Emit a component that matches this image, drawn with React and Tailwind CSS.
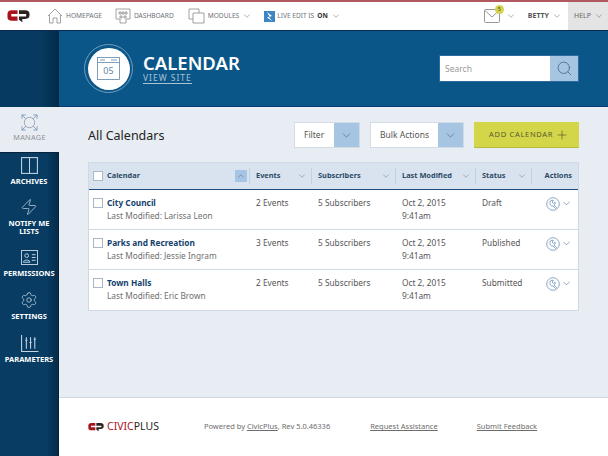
import React from 'react';
import { ChevronDown, ChevronUp, Search, Plus, Settings, Zap } from 'lucide-react';

const font = 'font-["Noto_Sans","Open_Sans",sans-serif]';

const CpLogo = ({ className }) => (
  <svg viewBox="0 0 24 14" className={className}>
    <path d="M11 1H5Q0.500 1 0.500 5V8Q0.500 12 5 12H11V7.500H4.500V5H11Z" fill="#a8141e" />
    <path d="M12.500 1H19Q23.500 1 23.500 5V6Q23.500 10 19 10H16V13.500L12.500 11V7.500H20V5H12.500Z" fill="#2b2320" />
  </svg>
);

const TopLink = ({ icon, label, chevron, gap }) => (
  <div className={`flex items-center ${gap}`}>
    {icon}
    <span className="ml-[3px] text-[6.600px] text-[#6d7278]">{label}</span>
    {chevron && <ChevronDown size={10} strokeWidth={1.2} className="ml-[3px] text-[#666]" />}
  </div>
);

const NavItem = ({ icon, label, mb }) => (
  <div className={`flex flex-col items-center ${mb}`}>
    <div className="h-[23px] pt-[1px] flex items-center justify-center">{icon}</div>
    <div className="mt-[1px] text-[7.500px] leading-[8px] font-bold text-white text-center">{label}</div>
  </div>
);

const navIcon = 'w-[19px] h-[19px] text-[#c5d5e4]';

const ActionIcon = () => (
  <svg viewBox="0 0 14 14" className="w-[14px] h-[14px] text-[#6b93b8]" fill="none" stroke="currentColor" strokeWidth="0.8">
    <circle cx="7" cy="7" r="6.300" />
    <path d="M4 6.500A2.500 2.500 0 0 1 7.500 3.500L6 5L7.500 6.500L9 5A2.500 2.500 0 0 1 8 8L10.500 10.500L9.500 11.500L7 9A2.500 2.500 0 0 1 4 6.500Z" />
  </svg>
);

const rows = [
  { name: 'City Council', by: 'Larissa Leon', events: '2 Events', status: 'Draft' },
  { name: 'Parks and Recreation', by: 'Jessie Ingram', events: '3 Events', status: 'Published' },
  { name: 'Town Halls', by: 'Eric Brown', events: '2 Events', status: 'Submitted' },
];

const grid = 'grid grid-cols-[161px_62px_84px_80px_56px_48px]';

const HeadCell = ({ label }) => (
  <div className="relative flex items-center justify-between pl-[6px] pr-[5px] text-[7.400px] font-bold text-[#2c4a66]">
    <span>{label}</span>
    <ChevronDown size={10} strokeWidth={1} className="text-[#4d6277]" />
    <span className="absolute right-0 top-[5px] bottom-[5px] w-px bg-[#c3d0de]" />
  </div>
);

const Checkbox = () => <span className="block w-[10px] h-[10px] border border-[#a9b6c4] bg-white" />;

const App = () => {
  return (
    <div className={`w-[608px] h-[456px] overflow-hidden flex flex-col bg-white ${font}`}>
      {/* top bar */}
      <div className="h-[31px] shrink-0 flex border-t-2 border-t-[#b05a60] border-b border-b-[#0a2a55] bg-white">
        <div className="w-[47px] flex items-center pl-[7px]">
          <CpLogo className="w-[23px] h-[14px]" />
        </div>
        <TopLink
          gap="mr-[13px]"
          label="HOMEPAGE"
          icon={
            <svg viewBox="0 0 16 16" className="w-[16px] h-[16px]" fill="none" stroke="#8c8c8c" strokeWidth="0.8">
              <path d="M1 8L8 1L15 8M2.500 7V15H6V10H10V15H13.500V7" />
            </svg>
          }
        />
        <TopLink
          gap="mr-[14px]"
          label="DASHBOARD"
          icon={
            <svg viewBox="0 0 16 16" className="w-[16px] h-[16px]" fill="none" stroke="#8c8c8c" strokeWidth="0.8">
              <path d="M1 1H15V11H11M5 11H1V1" />
              <path d="M4 4H6V6H4ZM7 4H9V6H7ZM10 4H12V6H10ZM5 8H7V10H5ZM9 8H11V10H9ZM5 11V15H11V11" />
            </svg>
          }
        />
        <TopLink
          chevron
          gap="mr-[12px]"
          label="MODULES"
          icon={
            <svg viewBox="0 0 17 16" className="w-[17px] h-[16px]" fill="none" stroke="#8c8c8c" strokeWidth="0.8">
              <path d="M5 11H1V1H11V5" />
              <path d="M5 5H16V15H5Z" />
            </svg>
          }
        />
        <div className="flex items-center">
          <svg viewBox="0 0 11 11" className="w-[11px] h-[11px]">
            <rect width="11" height="11" fill="#3b86c4" />
            <path d="M3 1L8 5L5 6L8 10L3 6.500L5.500 5.500Z" fill="white" />
          </svg>
          <span className="ml-[2px] text-[6.600px] text-[#6d7278]">LIVE EDIT IS</span>
          <span className="ml-[3px] text-[6.600px] font-bold text-[#333]">ON</span>
          <ChevronDown size={10} strokeWidth={1.2} className="ml-[3px] text-[#666]" />
        </div>
        <div className="ml-auto flex items-center">
          <div className="relative mr-[6px]">
            <svg viewBox="0 0 16 14" className="w-[16px] h-[14px]" fill="none" stroke="#8c8c8c" strokeWidth="0.9">
              <rect x="0.500" y="0.500" width="15" height="13" rx="1" />
              <path d="M1 1.500L8 8L15 1.500" />
            </svg>
            <span className="absolute -top-[4px] -right-[4px] w-[9px] h-[9px] rounded-full bg-[#d3d34c] text-[5.500px] leading-[9px] text-center text-[#444]">5</span>
          </div>
          <ChevronDown size={10} strokeWidth={1.2} className="mr-[12px] text-[#666]" />
          <span className="text-[7px] font-bold text-[#555] mr-[3px]">BETTY</span>
          <ChevronDown size={10} strokeWidth={1.2} className="mr-[6px] text-[#666]" />
          <div className="h-full w-[40px] bg-[#e4e4e4] flex items-center pl-[6px] gap-[3px]">
            <span className="text-[7px] text-[#666]">HELP</span>
            <ChevronDown size={10} strokeWidth={1.2} className="text-[#666]" />
          </div>
        </div>
      </div>

      <div className="flex-1 flex min-h-0">
        {/* left column */}
        <div className="w-[59px] shrink-0 flex flex-col">
          <div className="h-[76px] bg-gradient-to-r from-[#063a60] via-[#063a60] via-70% to-[#022a47]" />
          <div className="h-[45px] bg-[#e8edf3] flex flex-col items-center pt-[7px]">
            <svg viewBox="0 0 18 18" className="w-[17px] h-[17px]" fill="none" stroke="#6c8cab" strokeWidth="0.8">
              <circle cx="9" cy="9" r="5.500" stroke="#8793a0" />
              <path d="M1 5V1H5M13 1H17V5M1 13V17H5M13 17H17V13" />
              <path d="M1 1L5 5M17 1L13 5M1 17L5 13M17 17L13 13" />
            </svg>
            <span className="mt-[1px] text-[7.300px] text-[#8b9198] tracking-[0.3px]">MANAGE</span>
          </div>
          <div className="flex-1 bg-gradient-to-r from-[#083c63] via-[#083c63] via-80% to-[#052c4a] border-t border-t-[#06223d] border-r border-r-[#06223d]">
            <NavItem
              mb="mb-[10px]"
              label="ARCHIVES"
              icon={
                <svg viewBox="0 0 18 18" className={navIcon} fill="none" stroke="currentColor" strokeWidth="1">
                  <rect x="1.500" y="1.500" width="15" height="15" />
                  <path d="M9 1.500V16.500" />
                </svg>
              }
            />
            <NavItem
              mb="mb-[10px]"
              label={<>NOTIFY ME<br />LISTS</>}
              icon={<Zap size={18} strokeWidth={1} className="text-[#c5d5e4]" />}
            />
            <NavItem
              mb="mb-[11px]"
              label="PERMISSIONS"
              icon={
                <svg viewBox="0 0 18 16" className="w-[17px] h-[15px] text-[#c5d5e4]" fill="none" stroke="currentColor" strokeWidth="1">
                  <rect x="0.500" y="0.500" width="17" height="15" />
                  <circle cx="6" cy="6" r="2" />
                  <path d="M2.500 13C2.500 10 9.500 10 9.500 13ZM11.500 5H15.500M11.500 8H15.500M11.500 11H15.500" />
                </svg>
              }
            />
            <NavItem mb="mb-[11px]" label="SETTINGS" icon={<Settings size={18} strokeWidth={1} className="text-[#c5d5e4]" />} />
            <NavItem
              mb="mb-[11px]"
              label="PARAMETERS"
              icon={
                <svg viewBox="0 0 18 18" className={navIcon} fill="none" stroke="currentColor" strokeWidth="1">
                  <path d="M1.500 1V16.500H17.500" />
                  <path d="M6 3V14M10 3V14M14 3V14" />
                  <path d="M5 6H7M9 8H11M13 5H15" />
                </svg>
              }
            />
          </div>
        </div>

        <div className="flex-1 flex flex-col min-w-0">
          {/* page header */}
          <div className="h-[76px] shrink-0 bg-[#0b5688] flex items-center pl-[25px] pr-[29px] border-b border-b-[#0a3a70]">
            <div className="w-[49px] h-[49px] rounded-full border border-[#6f9cbd] flex items-center justify-center">
              <div className="w-[42px] h-[42px] rounded-full bg-white flex items-center justify-center">
                <svg viewBox="0 0 23 23" className="w-[23px] h-[23px]" fill="none" stroke="#5f86a8" strokeWidth="0.8">
                  <rect x="0.500" y="0.500" width="22" height="22" />
                  <path d="M0.500 5.500H22.500M3 3H8M14 3H20" />
                  <text x="11.500" y="17" textAnchor="middle" fontSize="9" fill="#5f86a8" stroke="none">05</text>
                </svg>
              </div>
            </div>
            <div className="ml-[10px]">
              <div className="text-[18.500px] leading-[18px] font-semibold text-white">CALENDAR</div>
              <div className="w-fit text-[8.500px] leading-[11px] text-[#a9c3d9] tracking-[1px] border-b border-b-[#a9c3d9]">VIEW SITE</div>
            </div>
            <div className="ml-auto flex h-[27px] w-[140px] border border-[#2c6c9c]">
              <div className="flex-1 bg-white pl-[5px] text-[8.500px] leading-[25px] text-[#9a9a9a]">Search</div>
              <div className="w-[28px] bg-[#a6c5e2] flex items-center justify-center">
                <Search size={17} strokeWidth={1} className="text-[#37597a]" />
              </div>
            </div>
          </div>

          {/* content */}
          <div className="flex-1 bg-[#e8edf3] pl-[29px] pr-[29px] pt-[15px] border-b border-b-[#cfd9e4]">
            <div className="flex items-center h-[26px] mb-[14px]">
              <h1 className="pt-[2px] text-[12.500px] text-[#222]">All Calendars</h1>
              <div className="ml-auto flex h-[26px] w-[66px] border border-[#d3dbe4] bg-white">
                <span className="flex-1 pl-[9px] text-[8.500px] leading-[24px] text-[#555]">Filter</span>
                <span className="w-[25px] bg-[#a6c5e2] flex items-center justify-center">
                  <ChevronDown size={13} strokeWidth={1} className="text-[#34587c]" />
                </span>
              </div>
              <div className="ml-[10px] flex h-[26px] w-[94px] border border-[#d3dbe4] bg-white">
                <span className="flex-1 pl-[9px] text-[8.500px] leading-[24px] text-[#555]">Bulk Actions</span>
                <span className="w-[25px] bg-[#a6c5e2] flex items-center justify-center">
                  <ChevronDown size={13} strokeWidth={1} className="text-[#34587c]" />
                </span>
              </div>
              <div className="ml-[10px] flex items-center justify-between h-[26px] w-[105px] pl-[15px] pr-[10px] bg-[#d4d64a] border-b border-b-[#b9bb3c]">
                <span className="text-[7.500px] text-[#5a5a2c] tracking-[0.7px]">ADD CALENDAR</span>
                <Plus size={14} strokeWidth={1} className="text-[#45451f]" />
              </div>
            </div>

            <div className="border border-[#cfd9e4] bg-white">
              <div className={`${grid} h-[27px] bg-[#d9e3ef] border-b-[1.500px] border-b-[#1d4d7a]`}>
                <div className="relative flex items-center pl-[4px] pr-[3px] text-[7.400px] font-bold text-[#2c4a66]">
                  <Checkbox />
                  <span className="ml-[4px]">Calendar</span>
                  <span className="ml-auto w-[12px] h-[12px] bg-[#a6c5e2] flex items-center justify-center">
                    <ChevronUp size={10} strokeWidth={1} className="text-[#34587c]" />
                  </span>
                  <span className="absolute right-0 top-[5px] bottom-[5px] w-px bg-[#c3d0de]" />
                </div>
                <HeadCell label="Events" />
                <HeadCell label="Subscribers" />
                <HeadCell label="Last Modified" />
                <HeadCell label="Status" />
                <div className="flex items-center justify-end pr-[8px] text-[7.400px] font-bold text-[#2c4a66]">Actions</div>
              </div>
              {rows.map((row, i) => (
                <div key={row.name} className={`${grid} h-[40px] pt-[6px] text-[8.300px] leading-[13px] text-[#555] ${i < 2 ? 'border-b border-b-[#cfd9e4]' : ''}`}>
                  <div className="pl-[4px] flex">
                    <div className="pt-[2px]"><Checkbox /></div>
                    <div className="ml-[4px]">
                      <div className="font-bold text-[#123f6d]">{row.name}</div>
                      <div className="text-[#6f6f6f]">Last Modified: {row.by}</div>
                    </div>
                  </div>
                  <div className="pl-[6px]">{row.events}</div>
                  <div className="pl-[6px]">5 Subscribers</div>
                  <div className="pl-[6px]">Oct 2, 2015<br />9:41am</div>
                  <div className="pl-[6px]">{row.status}</div>
                  <div className="pl-[14px] flex items-start pt-[1px] gap-[1px]">
                    <ActionIcon />
                    <ChevronDown size={11} strokeWidth={1.3} className="mt-[1px] text-[#3f6e99]" />
                  </div>
                </div>
              ))}
            </div>
          </div>

          {/* footer */}
          <div className="h-[58px] shrink-0 bg-white flex items-center pl-[29px] text-[7.500px] text-[#6d6d6d]">
            <CpLogo className="w-[16px] h-[10px]" />
            <span className="ml-[3px] text-[10.500px] text-[#a8141e]">CIVIC</span>
            <span className="text-[10.500px] text-[#2b2320]">PLUS</span>
            <span className="ml-[45px]">Powered by <span className="underline">CivicPlus</span>, Rev 5.0.46336</span>
            <span className="ml-[40px] underline">Request Assistance</span>
            <span className="ml-[39px] underline">Submit Feedback</span>
          </div>
        </div>
      </div>
    </div>
  );
};

export default App;
